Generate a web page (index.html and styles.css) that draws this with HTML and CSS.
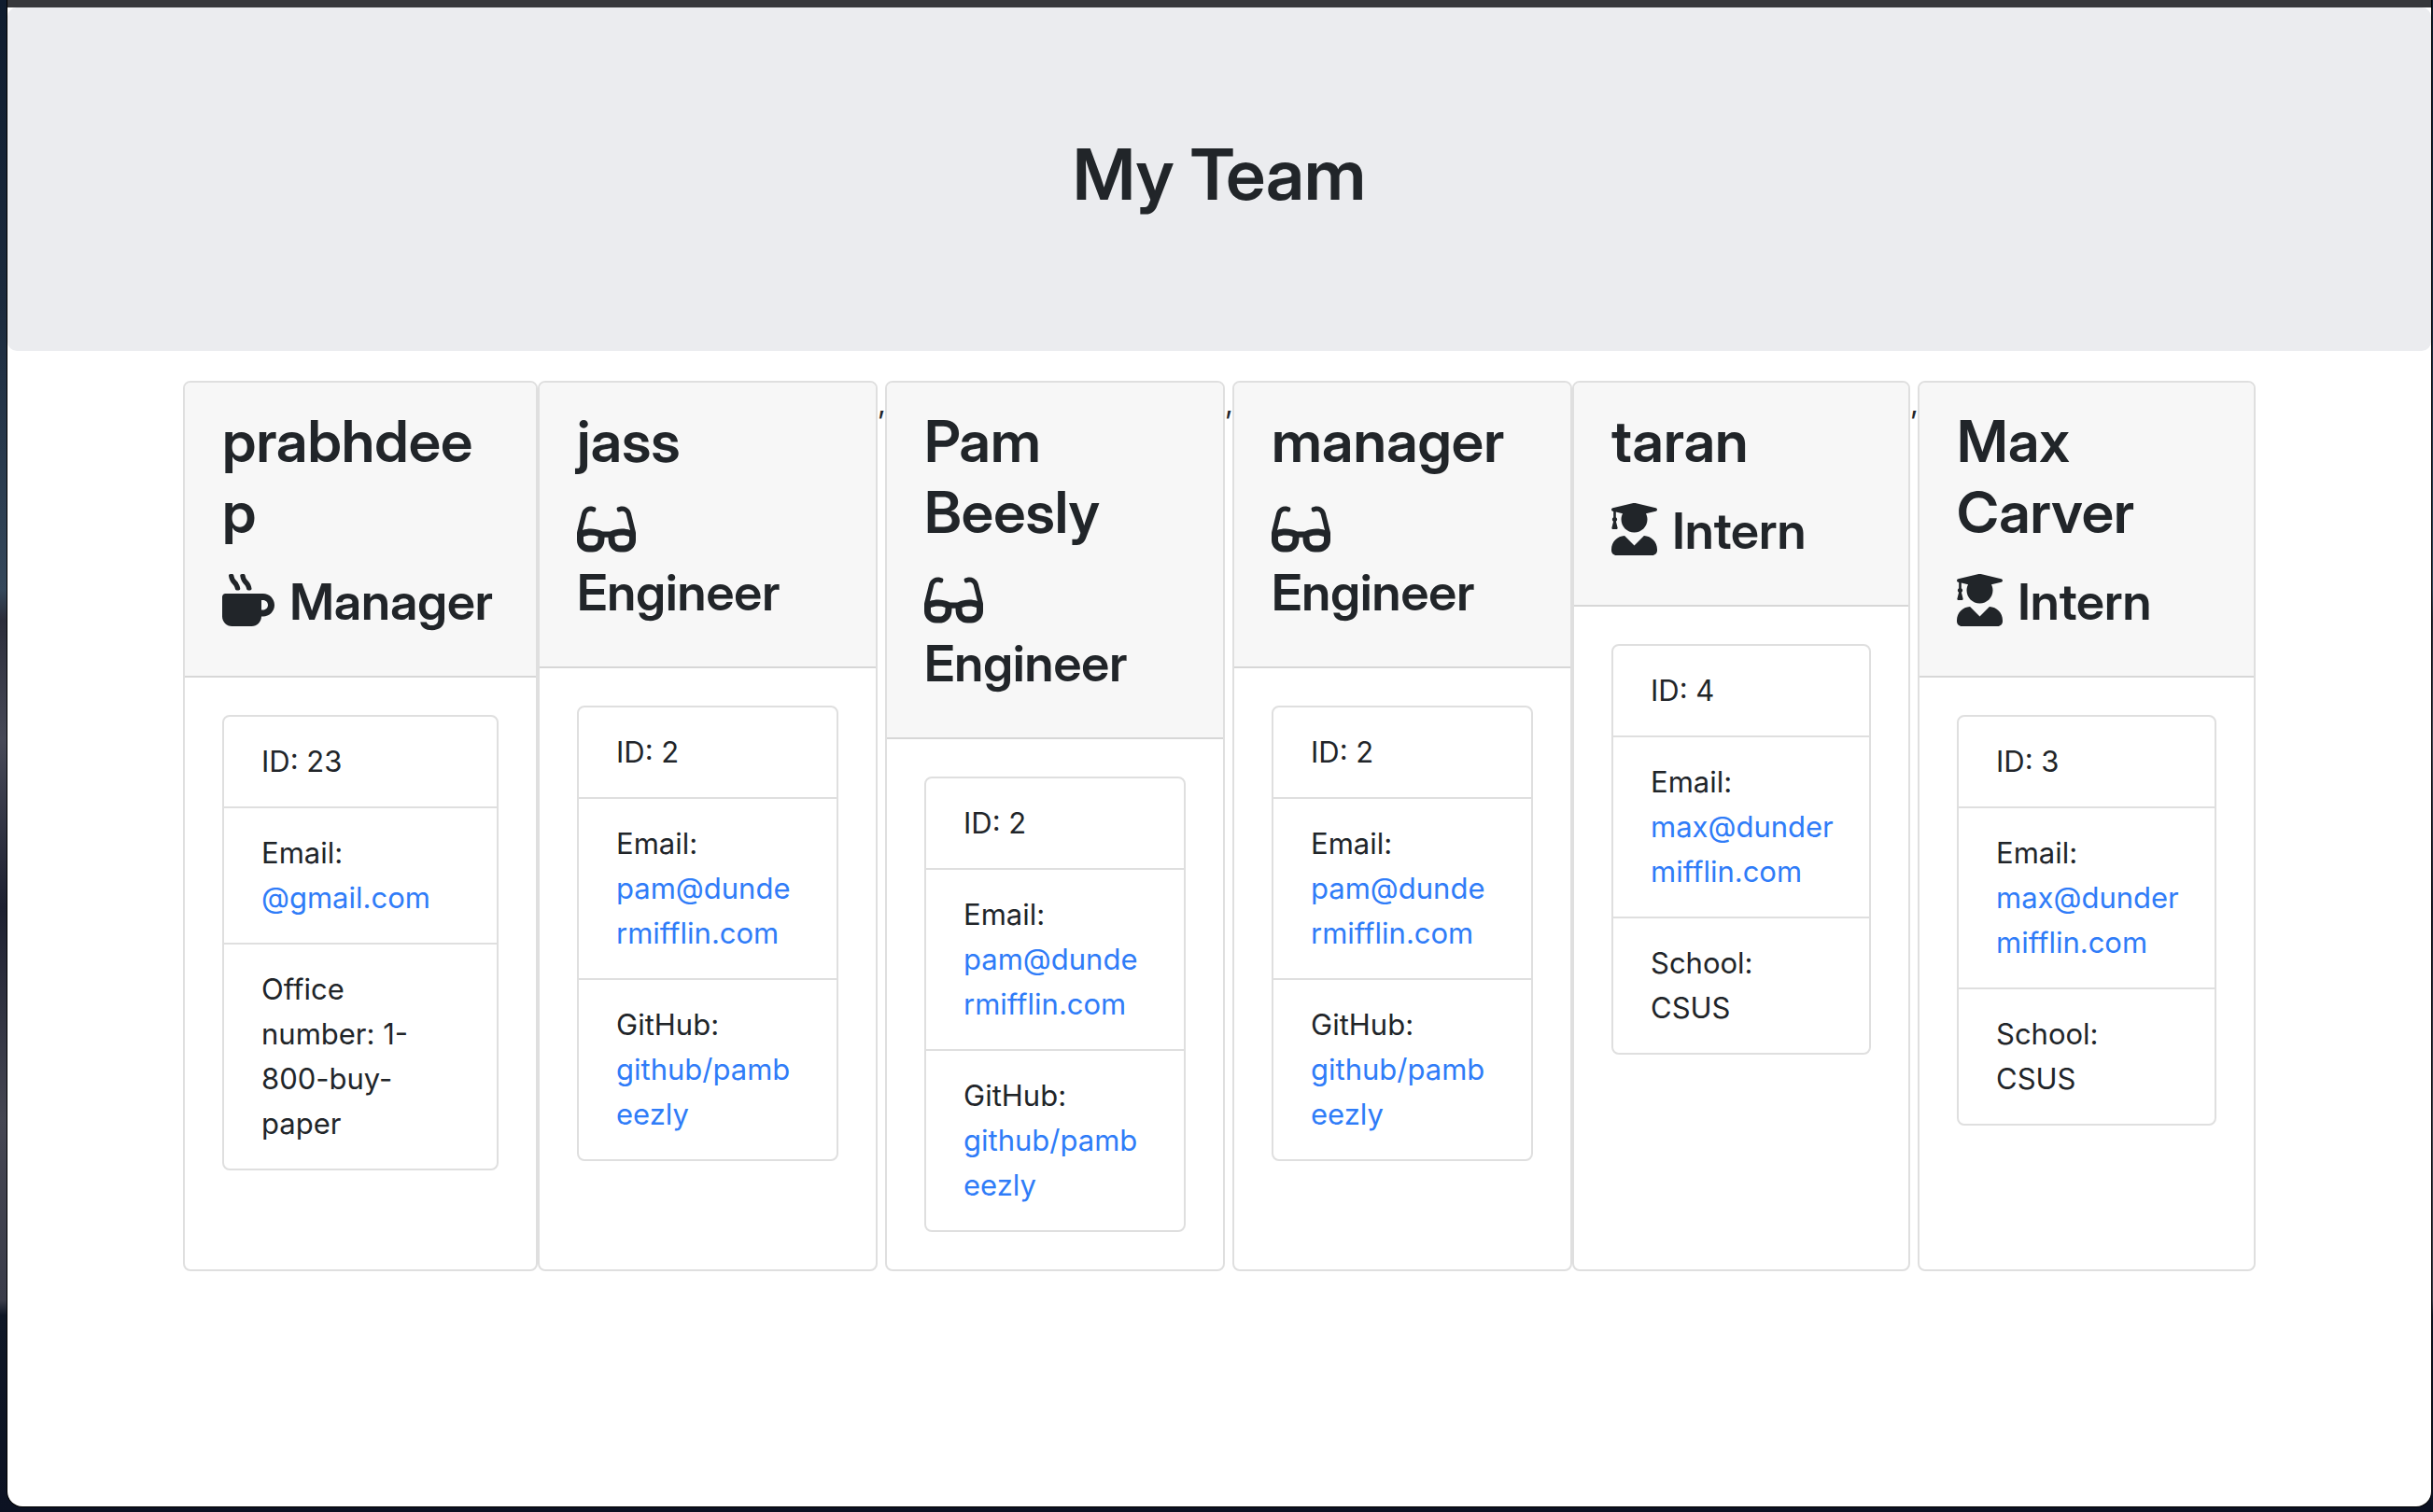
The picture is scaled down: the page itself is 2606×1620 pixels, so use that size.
FILE: index.html
```html
<!DOCTYPE html>
<html lang="en">
<head>
<meta charset="utf-8">
<meta name="viewport" content="width=device-width, initial-scale=1">
<title>My Team</title>
<link rel="stylesheet" href="styles.css">
</head>
<body>
<svg class="symbols" aria-hidden="true">
  <symbol id="mug" viewBox="0 0 512 512"><path d="M127.1 146.5c1.3 7.7 8 13.5 16 13.5h16.5c9.8 0 17.6-8.5 16.3-18-3.8-28.2-16.4-54.2-36.6-74.7-14.4-14.7-23.6-33.3-26.4-53.5C111.8 5.9 105 0 96.8 0H80.4C70.6 0 63 8.5 64.1 18c3.9 31.9 18 61.3 40.6 84.4 12 12.2 19.7 27.5 22.4 44.1zm112 0c1.3 7.7 8 13.5 16 13.5h16.5c9.8 0 17.6-8.5 16.3-18-3.8-28.2-16.4-54.2-36.6-74.7-14.4-14.7-23.6-33.3-26.4-53.5C223.8 5.9 217 0 208.8 0h-16.4c-9.8 0-17.5 8.5-16.3 18 3.9 31.9 18 61.3 40.6 84.4 12 12.2 19.7 27.5 22.4 44.1zM400 192H32c-17.7 0-32 14.3-32 32v192c0 53 43 96 96 96h192c53 0 96-43 96-96h16c61.8 0 112-50.2 112-112s-50.2-112-112-112zm0 160h-16v-96h16c26.5 0 48 21.5 48 48s-21.5 48-48 48z"/></symbol>
  <symbol id="glasses" viewBox="0 0 576 512"><path d="M574.1 280.37L528.75 98.66c-5.91-23.7-21.59-44.05-43-55.81-21.44-11.73-46.97-14.11-70.19-6.33l-15.25 5.08c-8.39 2.79-12.92 11.86-10.12 20.24l5.06 15.18c2.79 8.38 11.85 12.91 20.23 10.12l13.18-4.39c10.87-3.62 23-3.57 33.16 1.73 10.29 5.37 17.57 14.56 20.37 25.82l38.46 153.82c-22.19-6.81-49.79-12.46-81.2-12.46-34.77 0-73.98 7.02-114.85 26.74h-73.18c-40.87-19.74-80.08-26.75-114.86-26.75-31.42 0-59.02 5.65-81.21 12.46l38.46-153.83c2.79-11.25 10.09-20.45 20.38-25.81 10.16-5.3 22.28-5.35 33.15-1.73l13.17 4.39c8.38 2.79 17.44-1.74 20.23-10.12l5.06-15.18c2.8-8.38-1.73-17.45-10.12-20.24l-15.25-5.08c-23.22-7.78-48.75-5.41-70.19 6.33-21.41 11.77-37.09 32.11-43 55.8L1.9 280.37A64.218 64.218 0 0 0 0 295.86v70.25C0 429.01 51.58 480 115.2 480h37.12c60.28 0 110.37-45.94 114.88-105.37l2.93-38.63h35.75l2.93 38.63C313.31 434.06 363.4 480 423.68 480h37.12c63.62 0 115.2-50.99 115.2-113.88v-70.25c0-5.23-.64-10.43-1.9-15.5zm-370.72 89.42c-1.97 25.91-24.4 46.21-51.06 46.21H115.2C86.97 416 64 393.62 64 366.11v-37.54c18.12-6.49 43.42-12.92 72.58-12.92 23.86 0 47.26 4.33 69.93 12.92l-3.13 41.22zM512 366.12c0 27.51-22.97 49.88-51.2 49.88h-37.12c-26.67 0-49.1-20.3-51.06-46.21l-3.13-41.22c22.67-8.59 46.08-12.92 69.95-12.92 29.17 0 54.47 6.44 72.56 12.93v37.54z"/></symbol>
  <symbol id="graduate" viewBox="0 0 448 512"><path d="M319.4 320.6L224 416l-95.4-95.4C57.1 323.7 0 382.2 0 454.4v9.6c0 26.5 21.5 48 48 48h352c26.5 0 48-21.5 48-48v-9.6c0-72.2-57.1-130.7-128.6-133.8zM13.6 79.8l6.4 1.5v58.4c-7 4.2-12 11.5-12 20.3 0 8.4 4.6 15.4 11.1 19.7L3.5 242c-1.7 6.9 2.1 14 7.6 14h41.8c5.5 0 9.3-7.1 7.6-14l-15.6-62.3C51.4 175.4 56 168.4 56 160c0-8.8-5-16.1-12-20.3V87.1l66 15.9c-8.6 17.2-14 36.4-14 57 0 70.7 57.3 128 128 128s128-57.3 128-128c0-20.6-5.3-39.8-14-57l96.3-23.2c18.2-4.4 18.2-27.1 0-31.5l-190.4-46c-13-3.1-26.7-3.1-39.7 0L13.6 48.2c-18.1 4.4-18.1 27.2 0 31.6z"/></symbol>
</svg>
<div class="window">
  <header class="jumbotron"><h1>My Team</h1></header>
  <main class="team">
    <article class="card">
      <div class="card-header">
        <h2>prabhdeep</h2>
        <h3><svg class="icon icon-mug" aria-hidden="true"><use href="#mug"/></svg> Manager</h3>
      </div>
      <ul class="list">
        <li>ID: 23</li>
        <li>Email: <a href="mailto:@gmail.com">@gmail.com</a></li>
        <li>Office number: 1-800-buy-paper</li>
      </ul>
    </article>
    <article class="card">
      <div class="card-header">
        <h2>jass</h2>
        <h3><svg class="icon icon-glasses" aria-hidden="true"><use href="#glasses"/></svg> Engineer</h3>
      </div>
      <ul class="list">
        <li>ID: 2</li>
        <li>Email: <a href="mailto:pam@dundermifflin.com">pam@dunde<wbr>rmifflin.com</a></li>
        <li>GitHub: <a href="https://github.com/github/pambeezly">github/pamb<wbr>eezly</a></li>
      </ul>
    </article>
    <span class="comma">,</span>
    <article class="card">
      <div class="card-header">
        <h2>Pam Beesly</h2>
        <h3><svg class="icon icon-glasses" aria-hidden="true"><use href="#glasses"/></svg> Engineer</h3>
      </div>
      <ul class="list">
        <li>ID: 2</li>
        <li>Email: <a href="mailto:pam@dundermifflin.com">pam@dunde<wbr>rmifflin.com</a></li>
        <li>GitHub: <a href="https://github.com/github/pambeezly">github/pamb<wbr>eezly</a></li>
      </ul>
    </article>
    <span class="comma">,</span>
    <article class="card">
      <div class="card-header">
        <h2>manager</h2>
        <h3><svg class="icon icon-glasses" aria-hidden="true"><use href="#glasses"/></svg> Engineer</h3>
      </div>
      <ul class="list">
        <li>ID: 2</li>
        <li>Email: <a href="mailto:pam@dundermifflin.com">pam@dunde<wbr>rmifflin.com</a></li>
        <li>GitHub: <a href="https://github.com/github/pambeezly">github/pamb<wbr>eezly</a></li>
      </ul>
    </article>
    <article class="card">
      <div class="card-header">
        <h2>taran</h2>
        <h3><svg class="icon icon-graduate" aria-hidden="true"><use href="#graduate"/></svg> Intern</h3>
      </div>
      <ul class="list">
        <li>ID: 4</li>
        <li>Email: <a href="mailto:max@dundermifflin.com">max@dunder<wbr>mifflin.com</a></li>
        <li>School: CSUS</li>
      </ul>
    </article>
    <span class="comma">,</span>
    <article class="card">
      <div class="card-header">
        <h2>Max Carver</h2>
        <h3><svg class="icon icon-graduate" aria-hidden="true"><use href="#graduate"/></svg> Intern</h3>
      </div>
      <ul class="list">
        <li>ID: 3</li>
        <li>Email: <a href="mailto:max@dundermifflin.com">max@dunder<wbr>mifflin.com</a></li>
        <li>School: CSUS</li>
      </ul>
    </article>
  </main>
</div>
</body>
</html>
```
FILE: styles.css
```css
* { box-sizing: border-box; }

body {
  margin: 0;
  min-height: 100vh;
  display: flex;
  flex-direction: column;
  padding: 0 2px 6px 8px;
  background: linear-gradient(#0f1c2e, #1b2a3d 20%, #34475a 39%, #2b2d3a 41%, #474957 49%, #1d2030 60%, #454652 74%, #3a3c49 86%, #0f1726 87%, #0c1222);
  color: #212529;
  font: 400 31px/48px Inter, "Liberation Sans", sans-serif;
}

h1, h2, h3, ul { margin: 0; padding: 0; }

h1, h2, h3 { font-family: "Inter Display", Inter, "Liberation Sans", sans-serif; font-weight: 600; }

a { color: #2f7cf8; text-decoration: none; }

.symbols { display: none; }

/* Browser window: toolbar edge on top, page below */
.window {
  flex: 1;
  background: #fff;
  border-top: 8px solid #37383c;
  border-radius: 0 0 16px 16px;
  box-shadow: 0 0 0 1px #000;
}

.jumbotron {
  padding: 130px 64px 142px;
  background: #ebecef;
  border-radius: 10px;
  text-align: center;
}

h1 { font-size: 76px; line-height: 96px; }

.team {
  display: grid;
  grid-template-columns:
    minmax(0, 380fr) minmax(0, 364fr) 8px minmax(0, 364fr) 8px
    minmax(0, 364fr) minmax(0, 362fr) 8px minmax(0, 362fr);
  max-width: 2220px;
  margin: 32px auto 0;
}

.card {
  border: 2px solid #dfdfdf;
  border-radius: 8px;
  overflow-wrap: anywhere;
}

.card-header {
  padding: 25px 40px 46px;
  background: #f7f7f7;
  border-bottom: 2px solid #d7d7d7;
  border-radius: 6px 6px 0 0;
}

h2 { margin-bottom: 17px; font-size: 62px; line-height: 76px; }

h3 { font-size: 54px; line-height: 66px; }

/* The padding makes the line that holds the icon taller than the text */
.icon {
  height: 73px;
  margin-right: 4px;
  padding: 11px 0 6px;
  vertical-align: -13px;
  fill: currentColor;
}

.icon-mug { width: 56px; }
.icon-glasses { width: 63px; }
.icon-graduate { width: 49px; }

.list {
  margin: 40px;
  border: 2px solid #dfdfdf;
  border-radius: 8px;
  list-style: none;
}

.list li { padding: 24px 36px 24px 40px; }
.list li + li { border-top: 2px solid #dfdfdf; }
```
